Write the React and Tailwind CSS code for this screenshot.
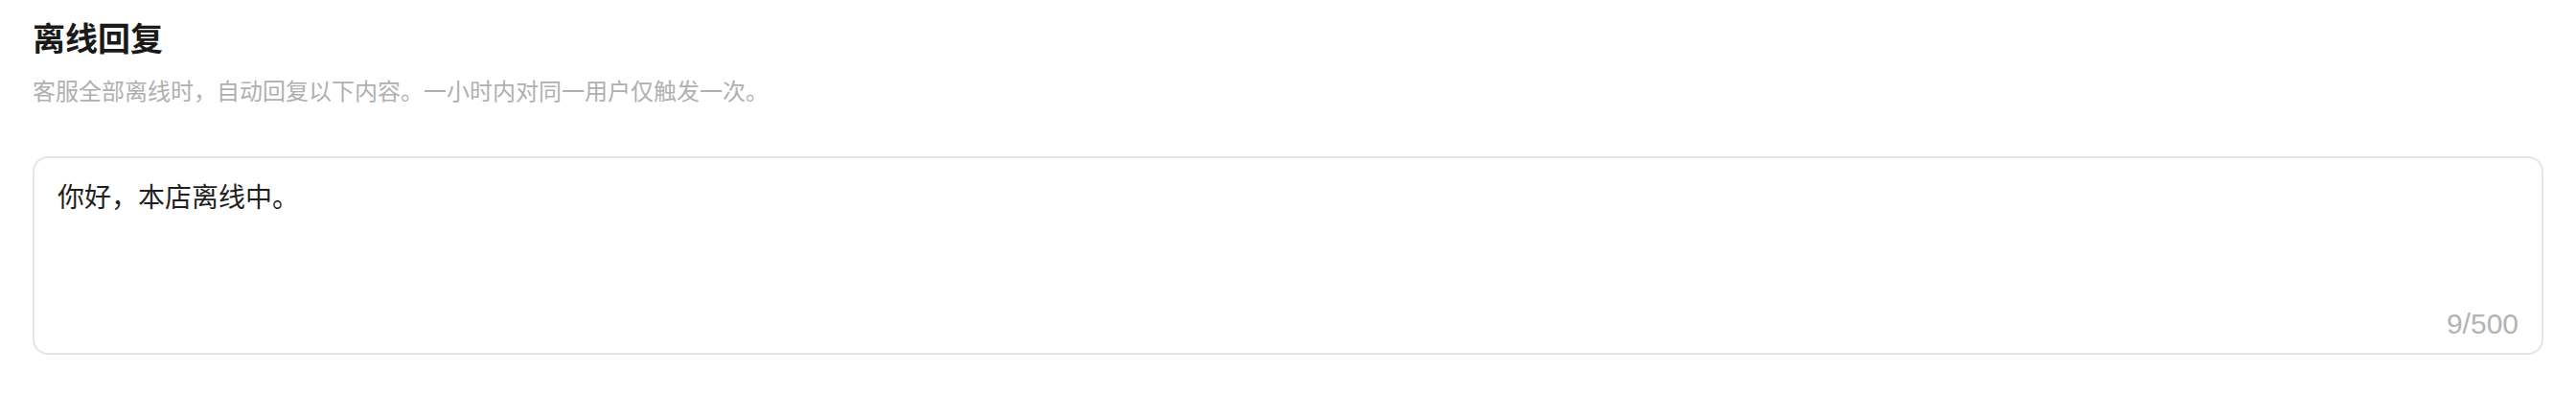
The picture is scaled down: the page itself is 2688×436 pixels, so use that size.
import React, { useState } from "react";

const CJK = "font-['Inter','Noto_Sans_CJK_SC',sans-serif]";

export default function App() {
  const [text, setText] = useState("你好，本店离线中。");

  return (
    <div className={`min-h-screen bg-white px-[34px] pt-[17px] ${CJK}`}>
      <h1 className="text-[34px] leading-[48px] font-bold text-[#1a1a1a]">离线回复</h1>
      <p className="mt-[13px] text-[24px] leading-[36px] text-[#b0b0b0]">
        客服全部离线时，自动回复以下内容。一小时内对同一用户仅触发一次。
      </p>

      <div className="relative mt-[49px] h-[207px] rounded-[16px] border-2 border-[#e4e4e4] bg-white">
        <textarea
          className="h-full w-full resize-none rounded-[16px] bg-transparent px-[24px] py-[20px] text-[28px] leading-[42px] text-[#1f1f1f] outline-none"
          value={text}
          maxLength={500}
          onChange={(e) => setText(e.target.value)}
        />
        <span className="absolute bottom-[12px] right-[24px] font-['Liberation_Sans',sans-serif] text-[30px] leading-[36px] text-[#b3b3b3]">
          {text.length}/500
        </span>
      </div>
    </div>
  );
}
